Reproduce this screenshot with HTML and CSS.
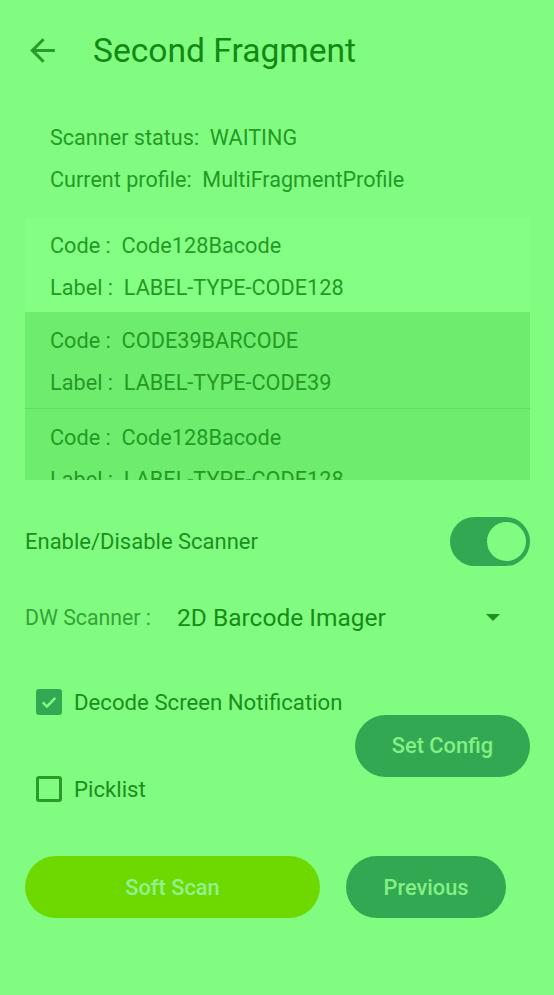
FILE: index.html
```html
<!DOCTYPE html>
<html>
<head>
<meta charset="utf-8">
<link rel="stylesheet" href="styles.css">
</head>
<body>
<div class="screen">
  <header class="toolbar">
    <svg class="back" viewBox="0 0 24 24" width="37" height="37"><path d="M20 11H7.83l5.59-5.59L12 4l-8 8 8 8 1.41-1.41L7.83 13H20v-2z" fill="currentColor"/></svg>
    <h1 class="title">Second Fragment</h1>
  </header>

  <section class="status">
    <div class="status-line">Scanner status:&nbsp;&nbsp;WAITING</div>
    <div class="status-line">Current profile:&nbsp;&nbsp;MultiFragmentProfile</div>
  </section>

  <section class="list">
    <div class="item item-first">
      <div class="line">Code :&nbsp;&nbsp;Code128Bacode</div>
      <div class="line">Label :&nbsp;&nbsp;LABEL-TYPE-CODE128</div>
    </div>
    <div class="item">
      <div class="line">Code :&nbsp;&nbsp;CODE39BARCODE</div>
      <div class="line">Label :&nbsp;&nbsp;LABEL-TYPE-CODE39</div>
    </div>
    <div class="item item-divided">
      <div class="line">Code :&nbsp;&nbsp;Code128Bacode</div>
      <div class="line">Label :&nbsp;&nbsp;LABEL-TYPE-CODE128</div>
    </div>
  </section>

  <div class="switch-row">
    <span class="switch-label">Enable/Disable Scanner</span>
    <span class="switch"><span class="thumb"></span></span>
  </div>

  <div class="spinner-row">
    <span class="spinner-label">DW Scanner :</span>
    <span class="spinner-value">2D Barcode Imager</span>
    <span class="caret"></span>
  </div>

  <div class="config">
    <div class="checks">
      <label class="check-row"><span class="box checked"><svg viewBox="0 0 24 24" width="24" height="24"><path d="M4.5 12.5l5 5L19.5 7" fill="none" stroke="currentColor" stroke-width="3"/></svg></span>Decode Screen Notification</label>
      <label class="check-row"><span class="box"></span>Picklist</label>
    </div>
    <button class="btn btn-dark btn-config">Set Config</button>
  </div>

  <div class="actions">
    <button class="btn btn-lime btn-scan">Soft Scan</button>
    <button class="btn btn-dark btn-prev">Previous</button>
  </div>
</div>
</body>
</html>
```
FILE: styles.css
```css
* { box-sizing: border-box; }
html, body { margin: 0; padding: 0; }
body {
  background: #81fc81;
  font-family: Roboto, "Noto Sans", sans-serif;
  color: #1f921f;
  width: 554px;
  height: 995px;
  overflow: hidden;
}
.screen { display: flex; flex-direction: column; }

.toolbar {
  height: 100px;
  display: flex;
  align-items: center;
  padding-left: 24px;
}
.back { color: #2a9a2a; margin-right: 32px; }
.title {
  margin: 0;
  font-size: 33.6px;
  font-weight: 400;
  color: #138913;
}

.status { padding: 17px 0 0 50px; }
.status-line { line-height: 42px; font-size: 21.6px; color: #249a24; }

.list {
  margin: 17px 24px 0 25px;
  height: 262px;
  overflow: hidden;
}
.item {
  padding: 8px 0 4px 25px;
  background: #6eec6e;
}
.item-first { background: #84ff84; height: 94px; padding-top: 7px; }
.item-divided { border-top: 1px solid #62df62; }
.line { line-height: 42px; font-size: 21.7px; color: #249a24; }

.switch-row {
  margin: 37px 24px 0 25px;
  display: flex;
  align-items: center;
  justify-content: space-between;
  height: 49px;
}
.switch-label { font-size: 22px; color: #1d8f1d; }
.switch {
  width: 80px;
  height: 49px;
  border-radius: 25px;
  background: #33a853;
  display: flex;
  align-items: center;
  justify-content: flex-end;
  padding-right: 4px;
}
.thumb {
  width: 39px;
  height: 39px;
  border-radius: 50%;
  background: #81fc81;
}

.spinner-row {
  margin: 27px 24px 0 25px;
  height: 48px;
  display: flex;
  align-items: center;
}
.spinner-label { font-size: 21.3px; color: #35a335; width: 152px; }
.spinner-value { font-size: 24.5px; color: #178c17; flex: 1; }
.caret {
  width: 0; height: 0;
  border-left: 7px solid transparent;
  border-right: 7px solid transparent;
  border-top: 7px solid #1f8f1f;
  margin-right: 30px;
}

.config {
  margin: 37px 24px 0 36px;
  display: flex;
  align-items: center;
  justify-content: space-between;
}
.checks { display: flex; flex-direction: column; gap: 39px; }
.check-row {
  height: 48px;
  display: flex;
  align-items: center;
  font-size: 22.2px;
  color: #1b8e1b;
}
.box {
  width: 26px;
  height: 26px;
  border: 3px solid #2a9a2a;
  border-radius: 3px;
  margin-right: 12px;
  display: flex;
  align-items: center;
  justify-content: center;
}
.box.checked { background: #33a853; border-color: #33a853; color: #81fc81; }

.btn {
  border: none;
  height: 62px;
  border-radius: 31px;
  font-family: Roboto, "Noto Sans", sans-serif;
  font-size: 21.8px;
  font-weight: 500;
  padding: 0;
}
.btn-dark { background: #33a853; color: #84f084; }
.btn-lime { background: #6dd900; color: #8ff28f; }
.btn-config { width: 175px; }

.actions {
  margin: 43px 0 0 25px;
  display: flex;
  gap: 26px;
}
.btn-scan { width: 295px; }
.btn-prev { width: 160px; }
```
